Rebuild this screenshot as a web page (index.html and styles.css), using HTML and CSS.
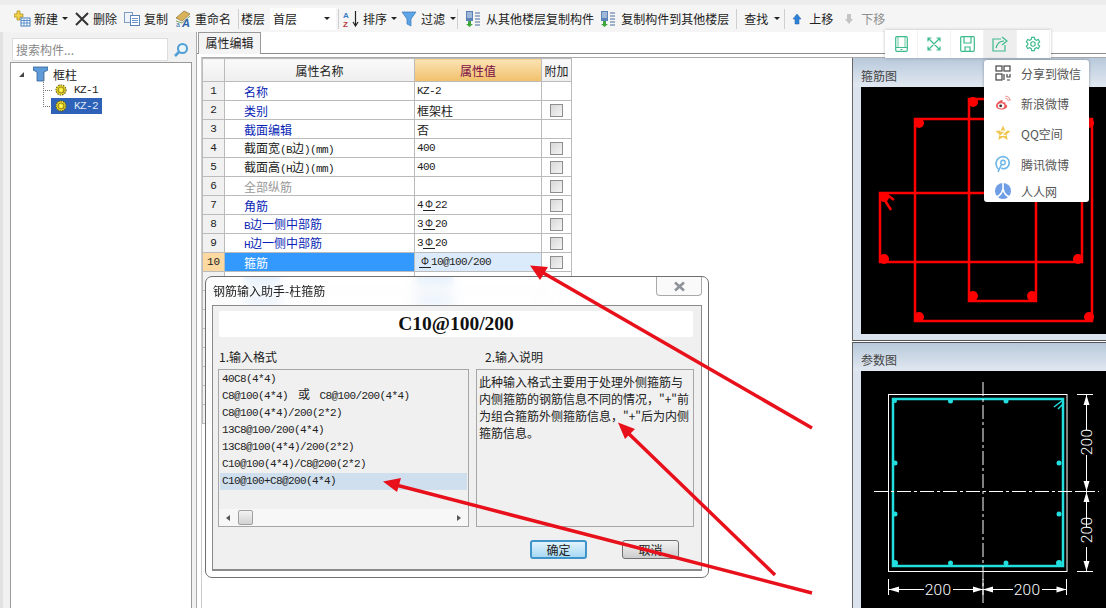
FILE: index.html
```html
<!DOCTYPE html>
<html lang="zh-CN">
<head>
    <meta charset="UTF-8">
    <title>属性编辑</title>
    <link rel="stylesheet" href="styles.css">
</head>
<body>
<div class="app">

    <!-- barre d'outils -->
    <div class="toolbar">
        <div class="tool t-new">
            <svg width="17" height="17" viewBox="0 0 17 17"><path d="M3 1h3v3h3v3H6v3H3V7H0V4h3z" fill="#f2d24b" stroke="#a58a1c" stroke-width=".7"/><rect x="7" y="8" width="9" height="8" fill="#fff" stroke="#3f7cc0"/><path d="M7 10.500h9M7 13h9M10 9v7M13 9v7" stroke="#3f7cc0" stroke-width=".8"/></svg>
            <span>新建</span><i class="caret"></i>
        </div>
        <div class="tool t-del">
            <svg width="14" height="14" viewBox="0 0 14 14"><path d="M1 1l12 12M13 1L1 13" stroke="#333" stroke-width="2"/></svg>
            <span>删除</span>
        </div>
        <div class="tool t-copy">
            <svg width="16" height="14" viewBox="0 0 16 14"><rect x=".5" y=".5" width="8" height="10" fill="#eef3fa" stroke="#7f9cc4"/><rect x="6.500" y="3.500" width="9" height="10" fill="#fff" stroke="#5b83b8"/><path d="M8 6.500h6M8 8.500h6M8 10.500h6" stroke="#6c93c6"/></svg>
            <span>复制</span>
        </div>
        <div class="tool t-rename">
            <svg width="17" height="18" viewBox="0 0 17 18"><path d="M1 8l8-7 6 3-8 7z" fill="#d9b25a" stroke="#8d7234" stroke-width=".7"/><path d="M1 11l6 2 8-7" fill="none" stroke="#7ea05a"/><text x="1" y="17" class="svg-small">a</text><text x="7" y="17" class="svg-a">A</text></svg>
            <span>重命名</span>
        </div>
        <i class="sep s-floor"></i>
        <span class="floor-label">楼层</span>
        <div class="floor-select"><span>首层</span><i class="caret"></i></div>
        <i class="sep s-sort"></i>
        <div class="tool t-sort">
            <svg width="17" height="17" viewBox="0 0 17 17"><text x="0" y="8" class="svg-sort-a">A</text><text x="0" y="16.500" class="svg-sort-z">Z</text><path d="M12.500 1v14M10 12l2.500 4 2.500-4" fill="none" stroke="#222" stroke-width="1.200"/></svg>
            <span>排序</span><i class="caret"></i>
        </div>
        <div class="tool t-filter">
            <svg width="16" height="16" viewBox="0 0 16 16"><path d="M1 1h14L10 8v7L6 13V8z" fill="#5da4e6" stroke="#3a78b8" stroke-width=".7"/></svg>
            <span>过滤</span><i class="caret"></i>
        </div>
        <i class="sep s-copy"></i>
        <div class="tool t-from">
            <svg width="16" height="17" viewBox="0 0 16 17"><use href="#layers"/></svg>
            <span>从其他楼层复制构件</span>
        </div>
        <div class="tool t-to">
            <svg width="16" height="17" viewBox="0 0 16 17"><use href="#layers"/></svg>
            <span>复制构件到其他楼层</span>
        </div>
        <i class="sep s-find"></i>
        <div class="tool t-find"><span>查找</span><i class="caret"></i></div>
        <i class="sep s-move"></i>
        <div class="tool t-up">
            <svg width="10" height="12" viewBox="0 0 10 12"><path d="M5 1l4 5H7v5H3V6H1z" fill="#2f82d8" stroke="#1d5fa8" stroke-width=".5"/></svg>
            <span>上移</span>
        </div>
        <div class="tool t-down off">
            <svg width="10" height="12" viewBox="0 0 10 12"><path d="M5 11l4-5H7V1H3v5H1z" fill="#c4c4c4"/></svg>
            <span>下移</span>
        </div>
    </div>

    <svg class="defs">
        <symbol id="layers" viewBox="0 0 16 17">
            <rect x="1" y="1" width="7" height="10" fill="#5b83b8"/>
            <path d="M2 3h5M2 5h5M2 7h5" stroke="#e3ecf7"/>
            <path d="M10 3h5M10 6h5M10 9h5M10 12h5M10 15h5" stroke="#4a6f9e" stroke-width="1.200"/>
            <path d="M3 11h3v3h2l-3.500 3L1 14h2z" fill="#3ea63a"/>
        </symbol>
        <symbol id="gear" viewBox="0 0 12 12">
            <circle cx="6" cy="6" r="5" fill="#f5e92e" stroke="#6b5f10" stroke-width="1.200" stroke-dasharray="1.500 1"/>
            <circle cx="6" cy="6" r="3" fill="none" stroke="#9a8420" stroke-width="1.200"/>
            <circle cx="6" cy="6" r="1.200" fill="#fdf66a"/>
        </symbol>
    </svg>

    <div class="workspace">

        <aside class="sidebar">
            <div class="search">
                <div class="search-input">搜索构件...</div>
                <svg class="search-icon" width="16" height="16" viewBox="0 0 16 16"><circle cx="9.500" cy="6.500" r="4.500" fill="#eaf5fc" stroke="#4f9fd6" stroke-width="2"/><path d="M6 10l-4 4" stroke="#4f9fd6" stroke-width="2.500"/></svg>
            </div>
            <div class="tree">
                <div class="tree-root">
                    <i class="tree-arrow"></i>
                    <svg width="15" height="16" viewBox="0 0 15 16"><path d="M0 1h15v3l-4 2v9H4V6L0 4z" fill="#5f9bd8" stroke="#2f5f98" stroke-width=".8"/></svg>
                    <span>框柱</span>
                </div>
                <div class="tree-item">
                    <svg width="12" height="12"><use href="#gear"/></svg>
                    <span class="mono">KZ-1</span>
                </div>
                <div class="tree-item selected">
                    <svg width="12" height="12"><use href="#gear"/></svg>
                    <span class="mono">KZ-2</span>
                </div>
            </div>
        </aside>

        <main class="main">
            <div class="tabs"><div class="tab">属性编辑</div></div>
            <div class="content">
                <div class="grid-area">
                    <table class="grid">
                        <thead>
                        <tr>
                            <th class="num"></th>
                            <th class="name">属性名称</th>
                            <th class="value">属性值</th>
                            <th class="extra">附加</th>
                        </tr>
                        </thead>
                        <tbody>
                        <tr><td class="num">1</td><td class="name blue">名称</td><td class="mono">KZ-2</td><td></td></tr>
                        <tr><td class="num">2</td><td class="name blue">类别</td><td>框架柱</td><td><i class="check"></i></td></tr>
                        <tr><td class="num">3</td><td class="name blue">截面编辑</td><td>否</td><td></td></tr>
                        <tr><td class="num">4</td><td class="name">截面宽<span class="mono">(B</span>边<span class="mono">)(mm)</span></td><td class="mono">400</td><td><i class="check"></i></td></tr>
                        <tr><td class="num">5</td><td class="name">截面高<span class="mono">(H</span>边<span class="mono">)(mm)</span></td><td class="mono">400</td><td><i class="check"></i></td></tr>
                        <tr><td class="num">6</td><td class="name gray">全部纵筋</td><td></td><td><i class="check"></i></td></tr>
                        <tr><td class="num">7</td><td class="name blue">角筋</td><td class="mono">4<span class="rebar">Φ</span>22</td><td><i class="check"></i></td></tr>
                        <tr><td class="num">8</td><td class="name blue"><span class="mono">B</span>边一侧中部筋</td><td class="mono">3<span class="rebar">Φ</span>20</td><td><i class="check"></i></td></tr>
                        <tr><td class="num">9</td><td class="name blue"><span class="mono">H</span>边一侧中部筋</td><td class="mono">3<span class="rebar">Φ</span>20</td><td><i class="check"></i></td></tr>
                        <tr class="current"><td class="num">10</td><td class="name">箍筋</td><td class="mono cell-edit"><span class="rebar">Φ</span>10@100/200</td><td><i class="check"></i></td></tr>
                        <tr><td class="num"></td><td class="name"><i class="ghost"></i></td><td><i class="ghost"></i></td><td></td></tr>
                        <tr><td class="num"></td><td class="name"><i class="ghost"></i></td><td><i class="ghost"></i></td><td></td></tr>
                        <tr><td class="num"></td><td></td><td></td><td></td></tr>
                        <tr><td class="num"></td><td></td><td></td><td></td></tr>
                        <tr><td class="num"></td><td></td><td></td><td></td></tr>
                        <tr><td class="num"></td><td></td><td></td><td></td></tr>
                        <tr><td class="num"></td><td></td><td></td><td></td></tr>
                        <tr><td class="num"></td><td></td><td></td><td></td></tr>
                        </tbody>
                    </table>
                </div>

                <div class="previews">
                    <section class="preview first">
                        <h3>箍筋图</h3>
                        <svg class="canvas" width="245" height="247" viewBox="0 0 245 247">
                            <g fill="none" stroke="#f00" stroke-width="2.500">
                                <rect x="54" y="32" width="177" height="202"/>
                                <rect x="108" y="12" width="67" height="202"/>
                                <rect x="19" y="106" width="202" height="69"/>
                                <path d="M20 107l10 16M25 107l8 6"/>
                            </g>
                            <g fill="#f00">
                                <circle cx="58" cy="36" r="5"/><circle cx="58" cy="230" r="5"/><circle cx="228" cy="230" r="5"/><circle cx="228" cy="36" r="5"/>
                                <circle cx="112" cy="15" r="5"/><circle cx="112" cy="209" r="5"/><circle cx="171" cy="209" r="5"/>
                                <circle cx="23" cy="110" r="5"/><circle cx="23" cy="172" r="5"/><circle cx="217" cy="172" r="5"/>
                            </g>
                        </svg>
                    </section>
                    <section class="preview second">
                        <h3>参数图</h3>
                        <svg class="canvas" width="245" height="237" viewBox="0 0 245 237">
                            <rect x="27.500" y="23.500" width="178.500" height="177" fill="none" stroke="#fff"/>
                            <rect x="32" y="28" width="170" height="167" fill="none" stroke="#22dede" stroke-width="2.500"/>
                            <path d="M193 36l9-7M197 38l6-6" stroke="#22dede" stroke-width="1.500"/>
                            <g fill="#22dede">
                                <circle cx="89.500" cy="30" r="2.500"/><circle cx="145" cy="30" r="2.500"/>
                                <circle cx="34" cy="92" r="2.500"/><circle cx="34" cy="143" r="2.500"/>
                                <circle cx="198" cy="92" r="2.500"/><circle cx="198" cy="143" r="2.500"/>
                                <circle cx="89.500" cy="192" r="2.500"/><circle cx="145" cy="192" r="2.500"/>
                                <circle cx="34" cy="192" r="3"/><circle cx="198" cy="192" r="3"/>
                                <circle cx="34" cy="30" r="2"/>
                            </g>
                            <g stroke="#fff" fill="none">
                                <path d="M122 11v223M13 120.500h225" stroke-dasharray="14 3 3 3"/>
                                <path d="M216 23.500h16M216 120.500h16M216 200.500h16M225.500 24v35M225.500 84v72M225.500 176v24"/>
                                <path d="M27.500 208v16M122 208v16M205.500 208v16M28 218.500h35M92 218.500h60M181 218.500h24"/>
                            </g>
                            <g fill="#fff">
                                <path d="M225.500 24l3 10h-6zM225.500 120l3-10h-6zM225.500 121l3 10h-6zM225.500 200l3-10h-6z"/>
                                <path d="M28 218.500l10-3v6zM122 218.500l-10-3v6zM122 218.500l10-3v6zM205.500 218.500l-10-3v6z"/>
                            </g>
                            <text class="dim" x="77" y="224" text-anchor="middle">200</text>
                            <text class="dim" x="166" y="224" text-anchor="middle">200</text>
                            <text class="dim" transform="translate(231 71) rotate(-90)" text-anchor="middle">200</text>
                            <text class="dim" transform="translate(231 159) rotate(-90)" text-anchor="middle">200</text>
                        </svg>
                    </section>
                </div>
            </div>
        </main>
    </div>

    <!-- fenetre de saisie, par-dessus le tableau -->
    <div class="dialog">
        <div class="dialog-head">
            <span>钢筋输入助手-柱箍筋</span>
            <div class="close">
                <svg width="13" height="11" viewBox="0 0 13 11"><path d="M2 1.500l9 8M11 1.500l-9 8" stroke="#8d9299" stroke-width="2.500"/></svg>
            </div>
        </div>
        <div class="dialog-body">
            <div class="formula">C10@100/200</div>
            <div class="columns">
                <div class="col-left">
                    <div class="col-title">1.输入格式</div>
                    <div class="box list">
                        <div class="list-rows">
                            <div>40C8(4*4)</div>
                            <div>C8@100(4*4) <b>或</b> C8@100/200(4*4)</div>
                            <div>C8@100(4*4)/200(2*2)</div>
                            <div>13C8@100/200(4*4)</div>
                            <div>13C8@100(4*4)/200(2*2)</div>
                            <div>C10@100(4*4)/C8@200(2*2)</div>
                            <div class="active">C10@100+C8@200(4*4)</div>
                        </div>
                        <div class="scrollbar">
                            <i class="arrow-left"></i>
                            <i class="thumb"></i>
                            <i class="arrow-right"></i>
                        </div>
                    </div>
                </div>
                <div class="col-right">
                    <div class="col-title indent">2.输入说明</div>
                    <div class="box note">此种输入格式主要用于处理外侧箍筋与<br>内侧箍筋的钢筋信息不同的情况，"+"前<br>为组合箍筋外侧箍筋信息，"+"后为内侧<br>箍筋信息。</div>
                </div>
            </div>
            <div class="dialog-foot">
                <button class="btn btn-ok">确定</button>
                <button class="btn btn-cancel">取消</button>
            </div>
        </div>
    </div>

    <!-- menu de partage -->
    <div class="share-bar">
        <div class="share-btn"><svg width="13" height="16" viewBox="0 0 13 16"><rect x=".7" y=".7" width="11.600" height="14.600" rx="1" fill="none" stroke="#3dbb8c" stroke-width="1.200"/><path d="M1 11.500h11M5.500 13.500h2" stroke="#3dbb8c"/><path d="M3 1v10M10 1v10" stroke="#3dbb8c" stroke-width=".8"/></svg></div>
        <div class="share-btn"><svg width="14" height="14" viewBox="0 0 14 14"><path d="M1 4.500V1h3.500M13 4.500V1H9.500M1 9.500V13h3.500M13 9.500V13H9.500M1 1l12 12M13 1L1 13" fill="none" stroke="#3dbb8c" stroke-width="1.200"/></svg></div>
        <div class="share-btn"><svg width="15" height="16" viewBox="0 0 15 16"><rect x=".7" y=".7" width="13.600" height="14.600" rx="1" fill="none" stroke="#3dbb8c" stroke-width="1.200"/><path d="M4 1v6h7V1M5 15v-4h5v4" fill="none" stroke="#3dbb8c" stroke-width="1.200"/></svg></div>
        <div class="share-btn on"><svg width="16" height="16" viewBox="0 0 16 16"><path d="M9 3H1v12h12V9" fill="none" stroke="#3dbb8c" stroke-width="1.200"/><path d="M4 12c1-4 4-7 8-7M10 1l5 4-5 4" fill="none" stroke="#3dbb8c" stroke-width="1.200"/></svg></div>
        <div class="share-btn"><svg width="16" height="16" viewBox="0 0 18 18"><path d="M7.500 1.500h3l.5 2.300 1.800 1 2.200-.8 1.500 2.600-1.700 1.600v1.600l1.700 1.600-1.500 2.600-2.200-.8-1.800 1-.5 2.300h-3l-.5-2.300-1.800-1-2.200.8-1.500-2.600 1.700-1.600V8.200L1.500 6.600 3 4l2.200.8 1.800-1z" fill="none" stroke="#3dbb8c" stroke-width="1.300"/><circle cx="9" cy="9" r="2.500" fill="none" stroke="#3dbb8c" stroke-width="1.300"/></svg></div>
    </div>
    <div class="share-menu">
        <div class="share-item i-wx">
            <svg width="16" height="16" viewBox="0 0 16 16"><g fill="none" stroke="#444" stroke-width="1.200"><rect x="1" y="1" width="6" height="5"/><rect x="9" y="1" width="6" height="5"/><rect x="1" y="9" width="6" height="6"/><path d="M9 9v6M12 9v3h3V9M12 15h3"/></g></svg>
            <span>分享到微信</span>
        </div>
        <div class="share-item i-wb">
            <svg width="16" height="16" viewBox="0 0 17 16"><path d="M6.500 5C3.500 6 1 8.500 1 11c0 2.500 3 4 6 4s6-1.500 6-3.500c0-1.500-1.500-2-2-2.200.5-1.500 0-2.500-2-2-1.200.3-1 .1-.9-.8C8.200 5 7.500 4.700 6.500 5z" fill="#ef5b5b"/><ellipse cx="6.500" cy="11" rx="3.500" ry="2.800" fill="#fff"/><circle cx="6" cy="11" r="1.500" fill="#333"/><path d="M11 3c2 0 3 1 3 3M11 .8c3.200 0 5 2 5 5" fill="none" stroke="#ef7d7d" stroke-width="1"/></svg>
            <span>新浪微博</span>
        </div>
        <div class="share-item i-qq">
            <svg width="16" height="16" viewBox="0 0 17 16"><path d="M8.500 0l2.400 5.300 5.600.6-4.200 3.800 1.200 5.800-5-3-5 3 1.200-5.800L.5 5.900l5.600-.6z" fill="#efc64e"/><path d="M5.500 6h6l-5 4.500h5" fill="none" stroke="#fff" stroke-width="1.300"/></svg>
            <span>QQ空间</span>
        </div>
        <div class="share-item i-tx">
            <svg width="16" height="18" viewBox="0 0 16 18"><path d="M4 15C1 12 .5 8 2 5c2-3.500 7-4.500 10-2 3 2.500 3 7 0 9.500-2 1.500-4 1.500-5.500.5" fill="none" stroke="#6db5e8" stroke-width="1.600"/><circle cx="8" cy="7.500" r="2.200" fill="none" stroke="#6db5e8" stroke-width="1.400"/><path d="M6.500 9.500L3 17" stroke="#6db5e8" stroke-width="1.600"/></svg>
            <span>腾讯微博</span>
        </div>
        <div class="share-item i-rr">
            <svg width="16" height="16" viewBox="0 0 16 16"><circle cx="8" cy="8" r="8" fill="#6f9ee6"/><path d="M8 0v6M8 6C7 10 5 13 1 14M8 6c1 4 3 7 7 8" fill="none" stroke="#fff" stroke-width="1.600"/></svg>
            <span>人人网</span>
        </div>
    </div>

    <!-- fleches rouges de l'annotation -->
    <svg class="arrows" width="1106" height="608" viewBox="0 0 1106 608">
        <g fill="none" stroke="#e8101a" stroke-width="3.500">
            <path d="M812 428L540 271"/>
            <path d="M775 575L626 431"/>
            <path d="M812 593L396 485"/>
        </g>
        <g fill="#e8101a">
            <path d="M530 265.500l18 1.500-8 13z"/>
            <path d="M618 422.500l17 6.500-10 10z"/>
            <path d="M383 481.500l18-3.500-4 14z"/>
        </g>
    </svg>
</div>
</body>
</html>
```

FILE: styles.css
```css
* {
    box-sizing: border-box;
}

body {
    margin: 0;
    font-family: "Noto Sans CJK SC", "Liberation Sans", sans-serif;
    font-size: 12px;
    color: #222;
    background-color: #fff;
}

.app {
    position: relative;
    width: 1106px;
    height: 608px;
    overflow: hidden;
    display: flex;
    flex-direction: column;
}

.defs {
    width: 0;
    height: 0;
    position: absolute;
}

.mono {
    font-family: "Liberation Mono", monospace;
    font-size: 11px;
    letter-spacing: -0.6px;
    line-height: 1;
}

.rebar {
    display: inline-block;
    width: 12px;
    font-family: "Liberation Sans", sans-serif;
    font-size: 10px;
    line-height: 10px;
    text-align: center;
    letter-spacing: 0;
    border-bottom: 1px solid #222;
}

/* TOOLBAR */
.toolbar {
    flex: none;
    height: 32px;
    padding: 5px 0 0 14px;
    display: flex;
    align-items: center;
    background: linear-gradient(to bottom, #ececec 0, #ececec 5px, #f5f5f5 5px);
}

.tool {
    flex: none;
    display: flex;
    align-items: center;
    gap: 4px;
    white-space: nowrap;
}

.tool svg {
    flex: none;
}

.tool.off {
    color: #8f8f8f;
}

.caret {
    width: 0;
    height: 0;
    margin-left: 1px;
    border-left: 3px solid transparent;
    border-right: 3px solid transparent;
    border-top: 3px solid #222;
}

.sep {
    flex: none;
    width: 1px;
    height: 20px;
    background-color: #cfcfcf;
}

.t-new { gap: 3px; }
.t-del { margin-left: 7px; }
.t-copy { margin-left: 7px; }
.t-rename { margin-left: 7px; gap: 3px; }
.s-floor { margin-left: 7px; }
.floor-label { margin-left: 2px; }
.s-sort { margin-left: 2px; }
.t-sort { margin-left: 4px; gap: 3px; }
.t-filter { margin-left: 4px; }
.s-copy { margin-left: 1px; }
.t-from { margin-left: 7px; gap: 5px; }
.t-to { margin-left: 6px; gap: 5px; }
.s-find { margin-left: 7px; }
.t-find { margin-left: 7px; }
.t-find .caret { margin-left: 2px; }
.s-move { margin-left: 4px; }
.t-up { margin-left: 7px; gap: 7px; }
.t-down { margin-left: 11px; gap: 7px; }

.floor-select {
    flex: none;
    width: 66px;
    height: 22px;
    margin-left: 5px;
    padding: 0 6px 0 3px;
    display: flex;
    align-items: center;
    justify-content: space-between;
    background-color: #fff;
}

/* ZONE PRINCIPALE */
.workspace {
    flex: 1;
    min-height: 0;
    display: flex;
}

.sidebar {
    flex: none;
    width: 197px;
    padding: 0 4px 0 7px;
    display: flex;
    flex-direction: column;
    background-color: #f1f1f1;
    border-left: 3px solid #e2e2e2;
    border-right: 1px solid #aaa;
}

.search {
    flex: none;
    height: 30px;
    padding: 6px 0 1px 2px;
    display: flex;
    align-items: stretch;
}

.search-input {
    width: 156px;
    padding-left: 3px;
    line-height: 21px;
    color: #888;
    background-color: #fff;
    border: 1px solid #ddd;
}

.search-icon {
    margin: 4px 0 0 5px;
}

.tree {
    flex: 1;
    padding-top: 3px;
    background-color: #fff;
    border: 1px solid #999;
    border-bottom: 0;
}

.tree-root {
    height: 16px;
    padding-left: 8px;
    display: flex;
    align-items: center;
    gap: 3px;
}

.tree-root span {
    margin-left: 2px;
}

.tree-arrow {
    width: 0;
    height: 0;
    margin-right: 6px;
    border-left: 5px solid transparent;
    border-bottom: 5px solid #444;
}

.tree-item {
    position: relative;
    width: 51px;
    height: 16px;
    margin-left: 40px;
    padding-left: 4px;
    display: flex;
    align-items: center;
    gap: 7px;
}

.tree-item::before {
    content: "";
    position: absolute;
    left: -8px;
    top: -6px;
    width: 8px;
    height: 14px;
    border-left: 1px dotted #777;
    border-bottom: 1px dotted #777;
}

.tree-item.selected {
    color: #dfe8f7;
    background-color: #2d62b8;
}

.main {
    flex: 1;
    min-width: 0;
    display: flex;
    flex-direction: column;
}

.tabs {
    flex: none;
    height: 22px;
    padding-left: 1px;
    border-bottom: 1px solid #8c8c8c;
}

.tab {
    width: 63px;
    height: 22px;
    text-align: center;
    line-height: 20px;
    background-color: #f4f4f4;
    border: 1px solid #999;
    border-bottom: 0;
}

.content {
    flex: 1;
    min-height: 0;
    margin: 3px 0 0 4px;
    display: flex;
    border-top: 1px solid #aaa;
    border-left: 1px solid #ccc;
}

.grid-area {
    flex: none;
    width: 650px;
}

/* STYLES DU TABLEAU */
.grid {
    width: 369px;
    table-layout: fixed;
    border-collapse: collapse;
    background-color: #fff;
}

.grid tr {
    height: 19px;
}

.grid th, .grid td {
    padding: 0 2px;
    border: 1px solid #bbb;
    font-weight: normal;
    line-height: 15px;
    white-space: nowrap;
    overflow: hidden;
}

.grid thead tr {
    height: 23px;
}

.grid th {
    background: linear-gradient(to bottom, #fafafa, #efefef);
}

.grid th.num { width: 22px; }
.grid th.name { width: 190px; text-align: center; }
.grid th.value {
    width: 127px;
    color: #7a0b45;
    background: linear-gradient(to bottom, #fbe3b3, #f1c06b);
}
.grid th.extra { width: 30px; padding: 0 2px; }

.grid td.num {
    padding: 0;
    text-align: center;
    font-family: "Liberation Mono", monospace;
    font-size: 11px;
    background-color: #f1f1f1;
}

.grid td.name { padding-left: 19px; }
.blue { color: #0a1fb5; }
.gray { color: #999; }

.grid td:last-child {
    text-align: center;
    vertical-align: middle;
}

.check {
    display: block;
    width: 13px;
    height: 13px;
    margin: 0 auto;
    border: 1px solid #8e8e8e;
    background: linear-gradient(135deg, #d8d8d8, #f4f4f4);
}

.current td.num { background-color: #fbd9a0; }
.current td.name { color: #fff; background-color: #3399ff; }
.current td.cell-edit { padding-left: 4px; background-color: #dcebfb; }

.ghost {
    display: block;
    width: 36px;
    height: 10px;
    background-color: #8fbcec;
}

.previews {
    flex: 1;
    min-width: 0;
    display: flex;
    flex-direction: column;
}

.preview {
    flex: none;
    padding-left: 8px;
    background-color: #dbe4ee;
    border-left: 1px solid #666;
}

.preview h3 {
    height: 29px;
    margin: 0 0 0 -8px;
    padding: 9px 0 0 8px;
    font-size: 12px;
    font-weight: normal;
    line-height: 17px;
    color: #444;
    background: linear-gradient(to bottom, #b8c9db, #e1e8f1);
}

.preview.first {
    height: 283px;
    border-bottom: 1px solid #555;
}

.preview.second {
    flex: 1;
    margin-top: 1px;
    border-top: 1px solid #555;
}

.preview.second h3 {
    height: 28px;
    padding-top: 8px;
}

.canvas {
    display: block;
    background-color: #000;
}

.dim {
    font-family: Roboto, "Liberation Sans", sans-serif;
    font-size: 15.5px;
    font-weight: 300;
    letter-spacing: 0.3px;
    fill: #fff;
}

.svg-small { font: 7px "Liberation Sans", sans-serif; fill: #3a6ea8; }
.svg-a { font: italic bold 11px "Liberation Sans", sans-serif; fill: #2f63a8; }
.svg-sort-a { font: bold 8px "Liberation Sans", sans-serif; fill: #3a7cc6; }
.svg-sort-z { font: bold 8px "Liberation Sans", sans-serif; fill: #b23a3a; }

/* FENETRE */
.dialog {
    position: absolute;
    left: 205px;
    top: 276px;
    width: 504px;
    height: 302px;
    padding: 0 6px 6px;
    display: flex;
    flex-direction: column;
    background-color: rgba(255, 255, 255, 0.78);
    backdrop-filter: blur(6px);
    border: 1px solid #707070;
    border-radius: 7px;
}

.dialog-head {
    flex: none;
    height: 28px;
    display: flex;
    justify-content: space-between;
    align-items: flex-start;
    line-height: 26px;
}

.dialog-head span {
    margin: 0 0 0 1px;
    padding-top: 1px;
}

.close {
    width: 46px;
    height: 19px;
    display: flex;
    justify-content: center;
    align-items: center;
    background-color: #fafafa;
    border: 1px solid #a9a9a9;
    border-top: 0;
    border-radius: 0 0 4px 4px;
}

.dialog-body {
    flex: 1;
    min-height: 0;
    padding: 5px 7px 0 5px;
    display: flex;
    flex-direction: column;
    background-color: #f0f0f0;
    border: 1px solid #8a8a8a;
    border-bottom: 2px solid #8a8a8a;
}

.formula {
    flex: none;
    height: 26px;
    margin: 0 1px;
    font-family: "Liberation Serif", serif;
    font-size: 19.5px;
    font-weight: bold;
    line-height: 26px;
    text-align: center;
    color: #111;
    background-color: #fff;
    border-radius: 2px;
}

.columns {
    flex: none;
    margin-top: 11px;
    display: flex;
    gap: 7px;
}

.col-left { width: 251px; }
.col-right { width: 218px; }

.col-title {
    height: 21px;
    line-height: 18px;
    padding-left: 1px;
}

.col-title.indent {
    padding-left: 9px;
}

.box {
    height: 158px;
    background-color: #f0f0f0;
    border: 1px solid #a6a6a6;
}

.list {
    display: flex;
    flex-direction: column;
    justify-content: space-between;
    padding-top: 1px;
}

.list-rows {
    padding: 0 1px;
}

.list-rows div {
    height: 17px;
    padding-left: 2px;
    font-family: "Liberation Mono", monospace;
    font-size: 11px;
    letter-spacing: -0.6px;
    line-height: 17px;
    white-space: nowrap;
}

.list-rows b {
    font-family: "Noto Sans CJK SC", sans-serif;
    font-size: 12px;
    font-weight: normal;
    line-height: 0;
    margin: 0 4px;
}

.list-rows .active {
    background-color: #cfdfee;
}

.scrollbar {
    flex: none;
    height: 17px;
    padding: 0 7px;
    display: flex;
    align-items: center;
    background-color: #f7f7f7;
}

.arrow-left, .arrow-right {
    width: 0;
    height: 0;
    border-top: 3px solid transparent;
    border-bottom: 3px solid transparent;
}

.arrow-left { border-right: 4px solid #555; }
.arrow-right { margin-left: auto; border-left: 4px solid #555; }

.thumb {
    width: 15px;
    height: 15px;
    margin-left: 8px;
    background: linear-gradient(to bottom, #f3f3f3, #d2d2d2);
    border: 1px solid #a0a0a0;
    border-radius: 2px;
}

.note {
    padding: 3px 2px;
    line-height: 17px;
    white-space: nowrap;
}

.dialog-foot {
    flex: none;
    margin-top: 13px;
    padding-right: 15px;
    display: flex;
    justify-content: flex-end;
    gap: 35px;
}

.btn {
    width: 57px;
    height: 19px;
    padding: 0;
    font-family: "Noto Sans CJK SC", sans-serif;
    font-size: 12px;
    line-height: 15px;
    color: #222;
    border-radius: 3px;
}

.btn-ok {
    background: linear-gradient(to bottom, #e2f3fc, #a8d9f4);
    border: 2px solid #3f95c9;
}

.btn-cancel {
    background: linear-gradient(to bottom, #f3f3f3, #cdcdcd);
    border: 1px solid #707070;
}

/* PARTAGE */
.share-bar {
    position: absolute;
    left: 885px;
    top: 30px;
    width: 166px;
    height: 28px;
    display: flex;
    background-color: #fff;
    box-shadow: 0 0 3px rgba(0, 0, 0, 0.25);
}

.share-btn {
    width: 33px;
    display: flex;
    justify-content: center;
    align-items: center;
    border-right: 1px solid #f2f2f2;
}

.share-btn.on {
    background-color: #eee;
}

.share-menu {
    position: absolute;
    left: 984px;
    top: 60px;
    width: 105px;
    height: 142px;
    padding-left: 11px;
    color: #555;
    background-color: #fff;
    border-radius: 3px;
    box-shadow: 0 0 3px rgba(0, 0, 0, 0.35);
}

.share-item {
    display: flex;
    align-items: center;
    gap: 10px;
    height: 30px;
    white-space: nowrap;
}

.share-item svg {
    flex: none;
}

.i-wx { margin-top: -2px; }
.i-tx { margin-top: 1px; }
.i-rr { height: 24px; }

/* FLECHES */
.arrows {
    position: absolute;
    left: 0;
    top: 0;
    pointer-events: none;
}
```
